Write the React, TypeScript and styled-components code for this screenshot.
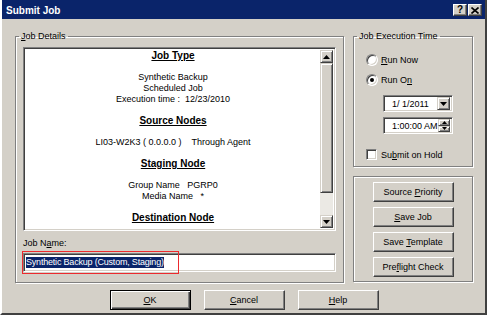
import React from 'react';
import styled, { createGlobalStyle, css } from 'styled-components';

const face = '#d4d0c8';
const shadow = '#808080';
const dark = '#404040';
const navy = '#0a246a';

const GlobalStyle = createGlobalStyle`
  * { box-sizing: border-box; }
  body {
    margin: 0;
    background: #fff;
    font-family: "Liberation Sans", Arial, sans-serif;
    font-size: 9px;
    color: #000;
  }
`;

const raised = css`
  background: ${face};
  border: 1px solid;
  border-color: #fff ${dark} ${dark} #fff;
  box-shadow: inset -1px -1px 0 ${shadow};
`;

const sunken = css`
  background: #fff;
  border: 1px solid;
  border-color: ${shadow} #fff #fff ${shadow};
  box-shadow: inset 1px 1px 0 ${dark}, inset -1px -1px 0 ${face};
`;

const Window = styled.div`
  width: 487px;
  height: 315px;
  display: flex;
  flex-direction: column;
  background: ${face};
  border-style: solid;
  border-width: 0 2px 2px 2px;
  border-color: #fff ${dark} ${dark} #fff;
`;

const TitleBar = styled.div`
  height: 19px;
  flex: none;
  display: flex;
  align-items: center;
  justify-content: space-between;
  padding: 1px 3px 0 4px;
  background: ${navy};
`;

const Title = styled.span`
  color: #fff;
  font-weight: bold;
  font-size: 10px;
`;

const CaptionButtons = styled.div`
  display: flex;
  gap: 1px;
`;

const CaptionButton = styled.span`
  ${raised};
  width: 14px;
  height: 12px;
  display: flex;
  align-items: center;
  justify-content: center;
  font-weight: bold;
  font-size: 10px;
  line-height: 10px;
`;

const Body = styled.div`
  padding: 12px 12px 0 13px;
`;

const MainRow = styled.div`
  display: flex;
  gap: 9px;
`;

const Group = styled.fieldset`
  margin: 0;
  min-width: 0;
  border: 1px solid ${shadow};
  box-shadow: 1px 1px 0 #fff, inset 1px 1px 0 #fff;
`;

// legend sits inside the fieldset padding, so pull it back towards the corner
const Legend = styled.legend<{ $shift: number }>`
  margin-left: ${p => 3 - p.$shift}px;
  padding: 0 2px;
  line-height: 11px;
`;

const DetailsGroup = styled(Group)`
  width: 329px;
  padding: 5px 7px 10px 7px;
`;

const ListBox = styled.div`
  ${sunken};
  height: 184px;
  padding: 2px;
  display: flex;
`;

const Sheet = styled.div`
  flex: 1;
  overflow: hidden;
  text-align: center;
`;

const Heading = styled.div`
  font-weight: bold;
  font-size: 10px;
  line-height: 12px;
  text-decoration: underline;
  margin-bottom: 10px;
`;

const Lines = styled.div`
  line-height: 11px;
  white-space: pre;
  margin-bottom: 10px;
`;

const ScrollBar = styled.div`
  width: 13px;
  display: flex;
  flex-direction: column;
  background: #ebe9e4;
`;

const ScrollArrow = styled.div`
  ${raised};
  border-color: ${face} ${dark} ${dark} ${face};
  box-shadow: inset 1px 1px 0 #fff, inset -1px -1px 0 ${shadow};
  height: 13px;
  display: flex;
  align-items: center;
  justify-content: center;
`;

const ScrollThumb = styled(ScrollArrow)`
  height: 130px;
`;

const ScrollTrack = styled.div`
  flex: 1;
`;

const FieldLabel = styled.div`
  margin-top: 7px;
  line-height: 11px;
`;

const TextField = styled.div`
  ${sunken};
  position: relative;
  margin-top: 4px;
  height: 19px;
  padding: 0 2px;
  display: flex;
  align-items: center;
`;

const Selection = styled.span`
  background: ${navy};
  color: #fff;
  line-height: 11px;
  letter-spacing: -0.2px;
  white-space: pre;
`;

const Annotation = styled.div`
  position: absolute;
  left: -2px;
  top: -3px;
  width: 157px;
  height: 23px;
  border: 1px solid #ec2a2e;
`;

const RightColumn = styled.div`
  width: 120px;
  display: flex;
  flex-direction: column;
  gap: 9px;
`;

const TimeGroup = styled(Group)`
  padding: 11px 8px 5px 12px;
`;

const OptionRow = styled.label<{ $top?: number }>`
  display: flex;
  align-items: center;
  height: 13px;
  margin-top: ${p => p.$top ?? 0}px;
  gap: 3px;
`;

const Radio = styled.span<{ $checked?: boolean }>`
  position: relative;
  width: 12px;
  height: 12px;
  border-radius: 50%;
  background: #fff;
  border: 1px solid;
  border-color: ${shadow} #fff #fff ${shadow};
  box-shadow: inset 1px 1px 0 ${dark}, inset -1px -1px 0 ${face};

  &::after {
    content: '';
    display: ${p => (p.$checked ? 'block' : 'none')};
    position: absolute;
    left: 3px;
    top: 3px;
    width: 4px;
    height: 4px;
    border-radius: 50%;
    background: #000;
  }
`;

const Checkbox = styled.span`
  ${sunken};
  width: 11px;
  height: 11px;
  margin-right: 1px;
`;

const PickerField = styled.div<{ $top: number }>`
  ${sunken};
  width: 70px;
  height: 17px;
  margin: ${p => p.$top}px 0 0 17px;
  padding: 2px 2px 2px 8px;
  display: flex;
  align-items: center;
  justify-content: space-between;
`;

const DropButton = styled.span`
  ${raised};
  border-color: ${face} ${dark} ${dark} ${face};
  box-shadow: inset 1px 1px 0 #fff, inset -1px -1px 0 ${shadow};
  width: 13px;
  height: 13px;
  display: flex;
  align-items: center;
  justify-content: center;
`;

const SpinButtons = styled.span`
  display: flex;
  flex-direction: column;
  width: 12px;
  height: 13px;
`;

const SpinButton = styled(DropButton)`
  width: 12px;
  height: 6.5px;
`;

const ActionGroup = styled(Group)`
  padding: 5px 0 4px 0;
  display: flex;
  flex-direction: column;
  align-items: center;
  gap: 5px;
`;

const PushButton = styled.button<{ $default?: boolean }>`
  width: 81px;
  height: 20px;
  padding: 0;
  font-family: inherit;
  font-size: 9px;
  color: #000;
  background: ${face};
  border: 1px solid;
  ${p =>
    p.$default
      ? css`
          border-color: #000;
          box-shadow: inset 1px 1px 0 #fff, inset -1px -1px 0 ${dark}, inset -2px -2px 0 ${shadow};
        `
      : css`
          border-color: #fff ${dark} ${dark} #fff;
          box-shadow: inset -1px -1px 0 ${shadow};
        `}
`;

const ButtonRow = styled.div`
  display: flex;
  justify-content: center;
  gap: 13px;
  margin-top: 7px;
`;

const Arrow = ({ up, w = 7, h = 4 }: { up?: boolean; w?: number; h?: number }) => (
  <svg width={w} height={h} viewBox={`0 0 ${w} ${h}`}>
    <polygon
      points={up ? `${w / 2},0 ${w},${h} 0,${h}` : `0,0 ${w},0 ${w / 2},${h}`}
      fill="#000"
    />
  </svg>
);

const sections = [
  { title: 'Job Type', lines: ['Synthetic Backup', 'Scheduled Job', 'Execution time :  12/23/2010'] },
  { title: 'Source Nodes', lines: ['LI03-W2K3 ( 0.0.0.0 )    Through Agent'] },
  { title: 'Staging Node', lines: ['Group Name   PGRP0', 'Media Name   *'] },
  { title: 'Destination Node', lines: [] as string[] },
];

const App: React.FC = () => (
  <>
    <GlobalStyle />
    <Window>
      <TitleBar>
        <Title>Submit Job</Title>
        <CaptionButtons>
          <CaptionButton>?</CaptionButton>
          <CaptionButton>
            <svg width="8" height="7" viewBox="0 0 8 7">
              <path d="M0.5 0.5 L7.5 6.5 M7.5 0.5 L0.5 6.5" stroke="#000" strokeWidth="1.6" />
            </svg>
          </CaptionButton>
        </CaptionButtons>
      </TitleBar>
      <Body>
        <MainRow>
          <DetailsGroup>
            <Legend $shift={7}>
              <u>J</u>ob Details
            </Legend>
            <ListBox>
              <Sheet>
                {sections.map(section => (
                  <React.Fragment key={section.title}>
                    <Heading>{section.title}</Heading>
                    {section.lines.length > 0 && (
                      <Lines>
                        {section.lines.map(line => (
                          <div key={line}>{line}</div>
                        ))}
                      </Lines>
                    )}
                  </React.Fragment>
                ))}
              </Sheet>
              <ScrollBar>
                <ScrollArrow>
                  <Arrow up />
                </ScrollArrow>
                <ScrollThumb />
                <ScrollTrack />
                <ScrollArrow>
                  <Arrow />
                </ScrollArrow>
              </ScrollBar>
            </ListBox>
            <FieldLabel>
              Job N<u>a</u>me:
            </FieldLabel>
            <TextField>
              <Selection>Synthetic Backup (Custom, Staging)</Selection>
              <Annotation />
            </TextField>
          </DetailsGroup>

          <RightColumn>
            <TimeGroup>
              <Legend $shift={12}>Job Execution Time</Legend>
              <OptionRow>
                <Radio />
                <span>
                  <u>R</u>un Now
                </span>
              </OptionRow>
              <OptionRow $top={7}>
                <Radio $checked />
                <span>
                  Run O<u>n</u>
                </span>
              </OptionRow>
              <PickerField $top={9}>
                <span>1/ 1/2011</span>
                <DropButton>
                  <Arrow />
                </DropButton>
              </PickerField>
              <PickerField $top={5}>
                <span>1:00:00 AM</span>
                <SpinButtons>
                  <SpinButton>
                    <Arrow up w={5} h={3} />
                  </SpinButton>
                  <SpinButton>
                    <Arrow w={5} h={3} />
                  </SpinButton>
                </SpinButtons>
              </PickerField>
              <OptionRow $top={14}>
                <Checkbox />
                <span>
                  Su<u>b</u>mit on Hold
                </span>
              </OptionRow>
            </TimeGroup>

            <ActionGroup>
              <PushButton>
                Source <u>P</u>riority
              </PushButton>
              <PushButton>
                <u>S</u>ave Job
              </PushButton>
              <PushButton>
                Save <u>T</u>emplate
              </PushButton>
              <PushButton>
                Pre<u>f</u>light Check
              </PushButton>
            </ActionGroup>
          </RightColumn>
        </MainRow>

        <ButtonRow>
          <PushButton $default>
            <u>O</u>K
          </PushButton>
          <PushButton>
            <u>C</u>ancel
          </PushButton>
          <PushButton>
            <u>H</u>elp
          </PushButton>
        </ButtonRow>
      </Body>
    </Window>
  </>
);

export default App;
